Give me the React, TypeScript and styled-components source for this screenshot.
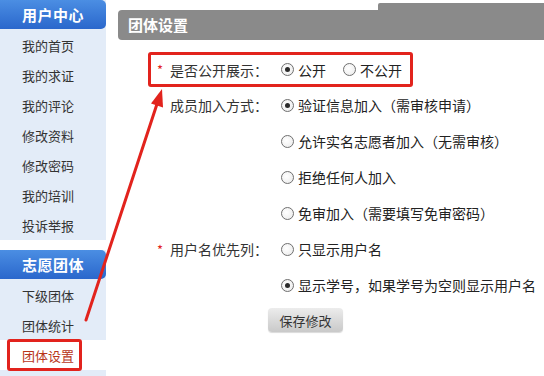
import React from "react";
import styled, { createGlobalStyle } from "styled-components";

const Global = createGlobalStyle`
  html, body { margin: 0; padding: 0; background: #fff; }
  body { font-family: "Noto Sans CJK SC", "Noto Sans", sans-serif; color: #333; }
  * { box-sizing: border-box; }
`;

const RED = "#e2231d";

const Page = styled.div`
  position: relative;
  width: 544px;
  height: 376px;
  overflow: hidden;
  display: flex;
`;

const Sidebar = styled.nav`
  width: 106px;
  flex-shrink: 0;
  display: flex;
  flex-direction: column;
  gap: 10px;
`;

const SideBlock = styled.div<{ $grow?: boolean }>`
  background: #e3ecf8;
  display: flex;
  flex-direction: column;
  flex: ${(p) => (p.$grow ? 1 : "none")};
`;

const SideHeader = styled.div`
  height: 29px;
  line-height: 29px;
  text-align: center;
  color: #fff;
  font-size: 15px;
  font-weight: bold;
  background: linear-gradient(#4b8ee3, #2a67cc);
  border-radius: 0 5px 5px 0;
  letter-spacing: 0.5px;
`;

const SideList = styled.ul`
  list-style: none;
  margin: 0;
  padding: 1px 0 0;
`;

const SideItem = styled.li<{ $active?: boolean }>`
  height: 30px;
  display: flex;
  align-items: center;
  padding-left: ${(p) => (p.$active ? "7px" : "22px")};
  font-size: 13px;
  color: ${(p) => (p.$active ? "#b8351a" : "#333")};
  background: ${(p) => (p.$active ? "#fff" : "transparent")};
`;

const Marked = styled.span`
  display: inline-flex;
  align-items: center;
  height: 32px;
  margin: -1px 0;
  padding: 0 5px 0 12px;
  border: 3px solid ${RED};
  border-radius: 3px;
`;

const Main = styled.main`
  flex: 1;
  margin-left: 12px;
  padding-top: 10px;
`;

const TitleBar = styled.div`
  position: relative;
  height: 30px;
  line-height: 30px;
  padding-left: 10px;
  background: #8a8a8a;
  color: #fff;
  font-size: 15px;
  font-weight: bold;
  border-radius: 4px 0 0 4px;
  &::after {
    content: "";
    position: absolute;
    left: 260px;
    right: 0;
    top: -7px;
    height: 8px;
    background: #8a8a8a;
    border-radius: 2px 0 0 0;
  }
`;

const Form = styled.form`
  margin: 12px 0 0 30px;
  display: flex;
  flex-direction: column;
  align-items: flex-start;
`;

const Row = styled.div<{ $marked?: boolean }>`
  display: flex;
  width: fit-content;
  padding: 0 8px 0 4px;
  border: ${(p) => (p.$marked ? `3px solid ${RED}` : "0")};
  margin: ${(p) => (p.$marked ? "0" : "0 3px")};
  border-radius: 3px;
`;

const Label = styled.div<{ $h: number }>`
  width: 126px;
  height: ${(p) => p.$h}px;
  display: flex;
  align-items: center;
  font-size: 14px;
  color: #333;
  flex-shrink: 0;
`;

const Star = styled.span`
  width: 15px;
  padding-left: 2px;
  color: ${RED};
  font-size: 13px;
`;

const Options = styled.div<{ $inline?: boolean }>`
  display: flex;
  flex-direction: ${(p) => (p.$inline ? "row" : "column")};
  gap: ${(p) => (p.$inline ? "17px" : "0")};
`;

const Option = styled.label<{ $h: number }>`
  height: ${(p) => p.$h}px;
  display: flex;
  align-items: center;
  gap: 4px;
  font-size: 14px;
  color: #222;
  white-space: nowrap;
`;

const Radio = styled.span<{ $on?: boolean }>`
  width: 13px;
  height: 13px;
  border-radius: 50%;
  border: 1px solid #6f6f6f;
  background: radial-gradient(circle at 40% 40%, #fff, #e9e9e9);
  display: inline-flex;
  align-items: center;
  justify-content: center;
  flex-shrink: 0;
  &::after {
    content: "";
    width: 5px;
    height: 5px;
    border-radius: 50%;
    background: #2b2b2b;
    display: ${(p) => (p.$on ? "block" : "none")};
  }
`;

const SaveButton = styled.button`
  margin: 5px 0 0 120px;
  width: 75px;
  height: 24px;
  border: 0;
  border-radius: 4px;
  background: linear-gradient(#ececec, #c9c9c9);
  box-shadow: 0 1px 1px rgba(0, 0, 0, 0.15);
  font-family: inherit;
  font-size: 13px;
  color: #333;
  padding: 0;
`;

const Overlay = styled.svg`
  position: absolute;
  left: 0;
  top: 0;
  pointer-events: none;
`;

type Opt = { text: string; on?: boolean };

const FieldRow: React.FC<{
  label: string;
  required?: boolean;
  marked?: boolean;
  inline?: boolean;
  options: Opt[];
}> = ({ label, required, marked, inline, options }) => {
  const h = inline ? 29 : 36;
  return (
    <Row $marked={marked}>
      <Label $h={h}>
        <Star>{required ? "*" : ""}</Star>
        {label}
      </Label>
      <Options $inline={inline}>
        {options.map((o) => (
          <Option key={o.text} $h={h}>
            <Radio $on={o.on} />
            {o.text}
          </Option>
        ))}
      </Options>
    </Row>
  );
};

export default function App() {
  return (
    <>
      <Global />
      <Page>
        <Sidebar>
          <SideBlock>
            <SideHeader>用户中心</SideHeader>
            <SideList>
              {["我的首页", "我的求证", "我的评论", "修改资料", "修改密码", "我的培训", "投诉举报"].map((t) => (
                <SideItem key={t}>{t}</SideItem>
              ))}
            </SideList>
          </SideBlock>
          <SideBlock $grow>
            <SideHeader>志愿团体</SideHeader>
            <SideList>
              <SideItem>下级团体</SideItem>
              <SideItem>团体统计</SideItem>
              <SideItem $active>
                <Marked>团体设置</Marked>
              </SideItem>
            </SideList>
          </SideBlock>
        </Sidebar>
        <Main>
          <TitleBar>团体设置</TitleBar>
          <Form onSubmit={(e) => e.preventDefault()}>
            <FieldRow
              marked
              inline
              required
              label="是否公开展示："
              options={[{ text: "公开", on: true }, { text: "不公开" }]}
            />
            <FieldRow
              label="成员加入方式："
              options={[
                { text: "验证信息加入（需审核申请）", on: true },
                { text: "允许实名志愿者加入（无需审核）" },
                { text: "拒绝任何人加入" },
                { text: "免审加入（需要填写免审密码）" },
              ]}
            />
            <FieldRow
              required
              label="用户名优先列："
              options={[
                { text: "只显示用户名" },
                { text: "显示学号，如果学号为空则显示用户名", on: true },
              ]}
            />
            <SaveButton type="submit">保存修改</SaveButton>
          </Form>
        </Main>
        <Overlay width="544" height="376" viewBox="0 0 544 376">
          <line x1="86" y1="320" x2="157" y2="104" stroke={RED} strokeWidth="3" strokeLinecap="round" />
          <polygon points="162,89 163,107.5 151,103.5" fill={RED} />
        </Overlay>
      </Page>
    </>
  );
}
